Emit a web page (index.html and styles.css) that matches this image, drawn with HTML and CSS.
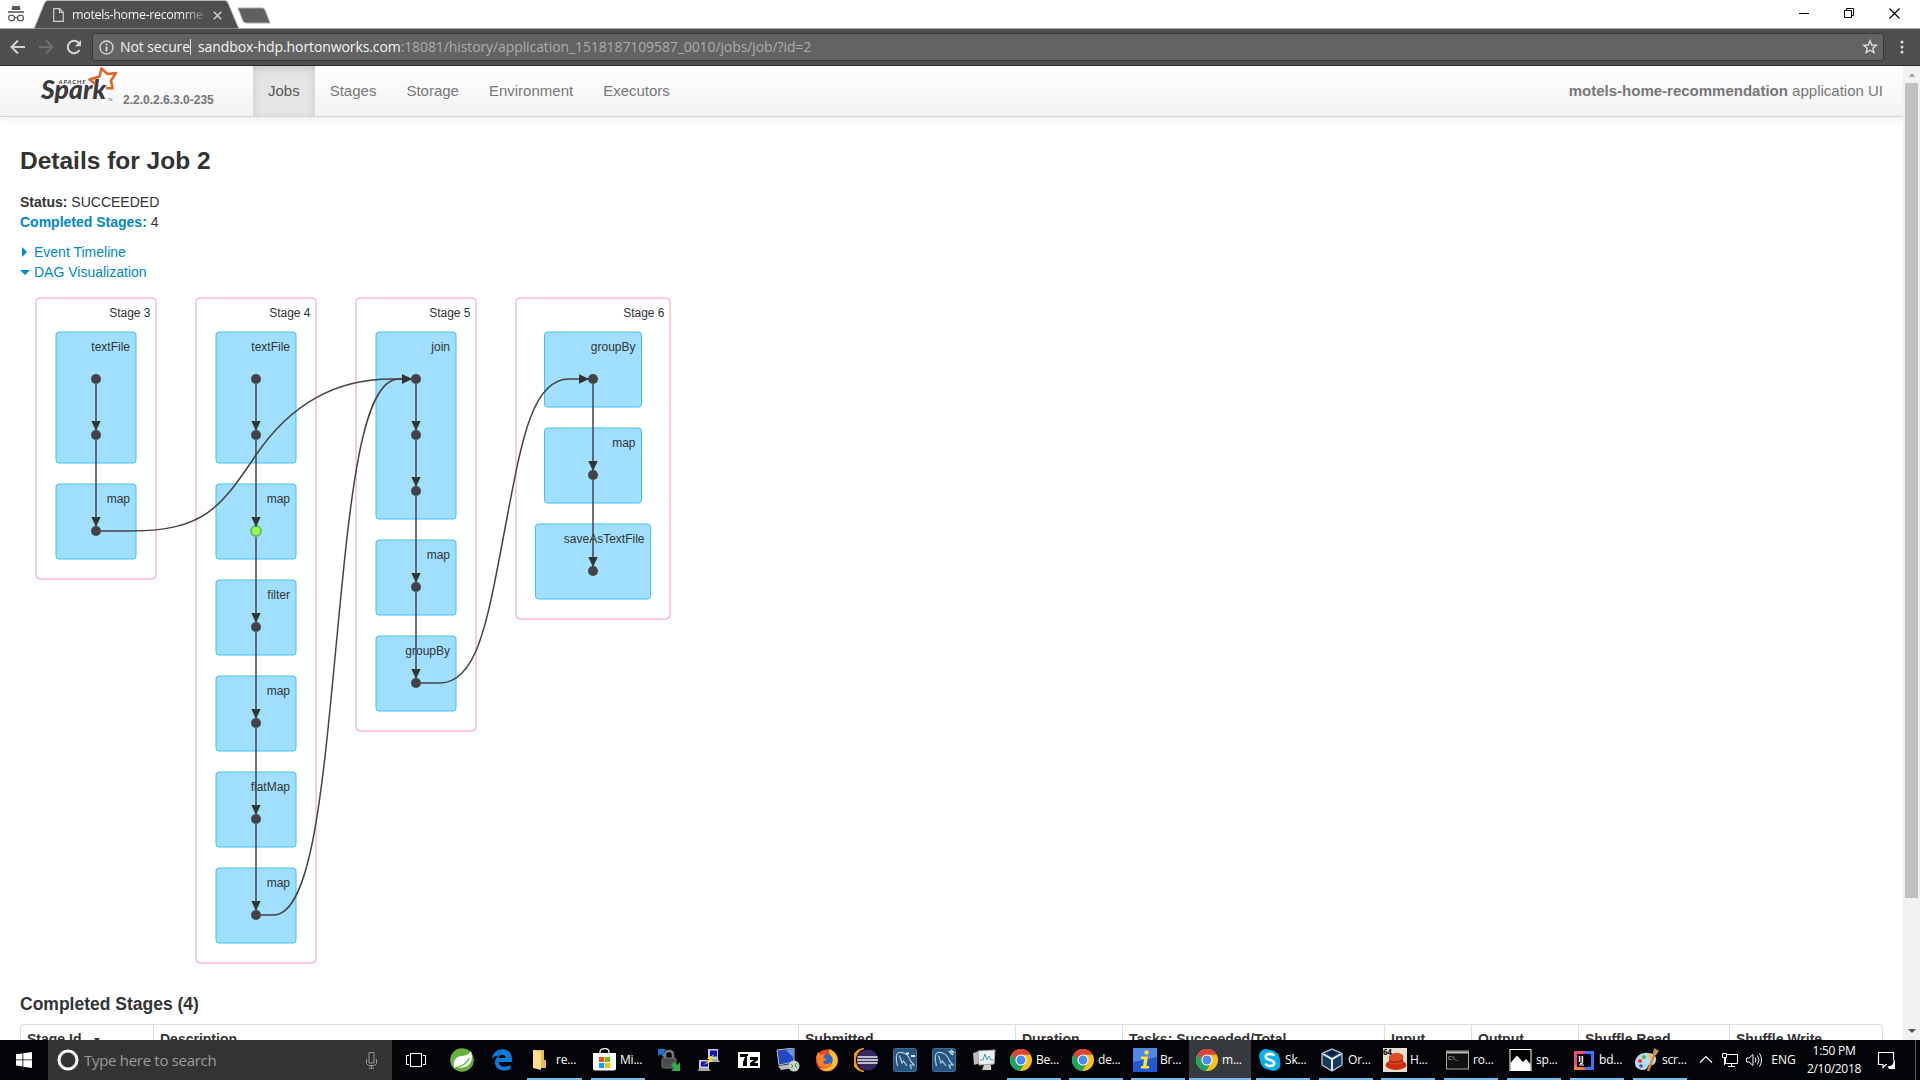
FILE: index.html
```html
<!DOCTYPE html>
<html lang="en">
<head>
<meta charset="utf-8">
<title>motels-home-recommendation - Details for Job 2</title>
<link rel="stylesheet" href="styles.css">
</head>
<body>
<svg class="defs" width="0" height="0">
  <defs>
    <marker id="arrow" viewBox="0 0 10 10" refX="9" refY="5" markerUnits="userSpaceOnUse" markerWidth="10" markerHeight="10" orient="auto"><path d="M0 0.3L10 5L0 9.7z" fill="#333"/></marker>
    <symbol id="chrome" viewBox="0 0 24 24">
      <circle cx="12" cy="12" r="11" fill="#fbc116"/>
      <path d="M12 12L2.5 6.5A11 11 0 0 1 21.5 6.5H12z" fill="#dc4437"/>
      <path d="M12 12L2.5 6.5A11 11 0 0 0 11 23L16.6 14.6z" fill="#1da462"/>
      <path d="M2.5 6.5A11 11 0 0 1 21.5 6.5H12L8 13z" fill="#dc4437"/>
      <circle cx="12" cy="12" r="5.6" fill="#fff"/><circle cx="12" cy="12" r="4.5" fill="#4a8af4"/>
    </symbol>
    <symbol id="mysql" viewBox="0 0 24 24">
      <rect x="0.5" y="0.5" width="23" height="23" rx="2" fill="#24567f" stroke="#3d7199"/>
      <path d="M4.500 18C2.500 11 3 5 6 4.500C12 4 16 8 17.500 13L21 17L17 17L18.500 21M6.500 7.500L9 15L10.500 13L14 18" fill="none" stroke="#b9cedd" stroke-width="1.200"/>
    </symbol>
  </defs>
</svg>

<header class="tabstrip">
  <svg class="incognito" width="18" height="18" viewBox="0 0 18 18"><path d="M4.500 5L5.500 0.500L9 1.200L12.500 0.500L13.500 5z" fill="#555"/><path d="M1 7H17" stroke="#555" stroke-width="1.600"/><g fill="none" stroke="#555" stroke-width="1.200"><circle cx="4.500" cy="13" r="2.900"/><circle cx="13.500" cy="13" r="2.900"/><path d="M7.400 12.500H10.600"/></g></svg>
  <div class="tab">
    <svg class="tabshape" width="206" height="29" viewBox="0 0 206 29"><path d="M0 29L10.500 3Q11.500 0.500 14 0.500H191Q193 0.500 194 3L205 29z" fill="#4f4f4f" stroke="#b5b5b5"/></svg>
    <svg class="tabfile" width="11" height="14" viewBox="0 0 11 14"><path d="M0.700 0.700H6.500L10.300 4.500V13.300H0.700zM6.500 0.700V4.500H10.300" fill="none" stroke="#d0d0d0" stroke-width="1.200"/></svg>
    <span class="tabtitle">motels-home-recommen</span>
    <svg class="tabclose" width="9" height="9" viewBox="0 0 9 9"><path d="M0.700 0.700L8.300 8.300M8.300 0.700L0.700 8.300" stroke="#ccc" stroke-width="1.600"/></svg>
  </div>
  <svg class="newtab" width="34" height="18" viewBox="0 0 34 18"><path d="M1 1H25Q27 1 28 3L33 16H10Q7 16 6 14z" fill="#606060" stroke="#aaa"/></svg>
  <div class="winbtns">
    <svg width="10" height="10" viewBox="0 0 10 10"><path d="M0 5.500H10" stroke="#000"/></svg>
    <svg width="10" height="10" viewBox="0 0 10 10"><path d="M0.500 2.500H7.500V9.500H0.500zM2.500 2.500V0.500H9.500V7.500H7.500" fill="none" stroke="#000"/></svg>
    <svg width="11" height="11" viewBox="0 0 11 11"><path d="M0.500 0.500L10.500 10.500M10.500 0.500L0.500 10.500" stroke="#000" stroke-width="1.200"/></svg>
  </div>
</header>

<div class="toolbar">
  <div class="navbtns">
    <svg width="16" height="16" viewBox="0 0 16 16"><path d="M15 8H2M8 1.500L1.500 8L8 14.500" fill="none" stroke="#d5d5d5" stroke-width="2"/></svg>
    <svg width="16" height="16" viewBox="0 0 16 16"><path d="M1 8H14M8 1.500L14.500 8L8 14.500" fill="none" stroke="#6f6f6f" stroke-width="2"/></svg>
    <svg width="16" height="16" viewBox="0 0 16 16"><path d="M13.500 11A6.200 6.200 0 1 1 12.500 3.600" fill="none" stroke="#d5d5d5" stroke-width="2"/><path d="M15 1V7.200H8.800z" fill="#d5d5d5"/></svg>
  </div>
  <div class="omnibox">
    <svg width="15" height="15" viewBox="0 0 15 15"><circle cx="7.500" cy="7.500" r="6.500" fill="none" stroke="#ddd" stroke-width="1.300"/><path d="M7.500 6.500V11.300M7.500 3.500V5.200" stroke="#ddd" stroke-width="1.800"/></svg>
    <span class="secure">Not secure</span>
    <span class="sep"></span>
    <span class="url"><b>sandbox-hdp.hortonworks.com</b>:18081/history/application_1518187109587_0010/jobs/job/?id=2</span>
    <svg class="star" width="16" height="16" viewBox="0 0 16 16"><path d="M8 1.800L9.700 6L14.200 6.300L10.800 9.200L11.900 13.600L8 11.200L4.100 13.600L5.200 9.200L1.800 6.300L6.300 6z" fill="none" stroke="#ddd" stroke-width="1.400"/></svg>
  </div>
  <svg class="kebab" width="4" height="14" viewBox="0 0 4 14"><g fill="#ddd"><circle cx="2" cy="2" r="1.500"/><circle cx="2" cy="7" r="1.500"/><circle cx="2" cy="12" r="1.500"/></g></svg>
</div>

<div class="viewport">
  <div class="page">
    <nav class="navbar">
      <svg class="logo" width="80" height="44" viewBox="0 0 80 44">
        <text class="apache" x="18.500" y="18" textLength="27">APACHE</text>
        <text class="spark" x="1" y="33" textLength="65" lengthAdjust="spacingAndGlyphs">Spark</text>
        <path d="M66 22L72.500 22.500L71 14.500L76 7L67.500 8L61.500 2.500L59.500 10.500L49.500 13.500L55.500 18" fill="none" stroke="#dd672c" stroke-width="2.700" stroke-linejoin="round"/>
        <text class="tm" x="68" y="35">TM</text>
      </svg>
      <span class="version">2.2.0.2.6.3.0-235</span>
      <a class="navlink active">Jobs</a><a class="navlink">Stages</a><a class="navlink">Storage</a><a class="navlink">Environment</a><a class="navlink">Executors</a>
      <p class="appname"><strong>motels-home-recommendation</strong> application UI</p>
    </nav>
    <main class="content">
      <h3>Details for Job 2</h3>
      <ul class="summary">
        <li><strong>Status:</strong> SUCCEEDED</li>
        <li><a><strong>Completed Stages:</strong></a> 4</li>
      </ul>
      <a class="toggle"><span class="caret right"></span>Event Timeline</a>
      <a class="toggle"><span class="caret down"></span>DAG Visualization</a>
      <svg class="dag" width="700" height="690" viewBox="20 282 700 690">
        <g class="stage">
          <rect x="36" y="298" width="120" height="281" rx="4"/><rect x="196" y="298" width="120" height="665" rx="4"/><rect x="356" y="298" width="120" height="433" rx="4"/><rect x="516" y="298" width="154" height="321" rx="4"/>
        </g>
        <g class="op">
          <rect x="56" y="332" width="80" height="131" rx="3"/><rect x="56" y="484" width="80" height="75" rx="3"/>
          <rect x="216" y="332" width="80" height="131" rx="3"/><rect x="216" y="484" width="80" height="75" rx="3"/><rect x="216" y="580" width="80" height="75" rx="3"/><rect x="216" y="676" width="80" height="75" rx="3"/><rect x="216" y="772" width="80" height="75" rx="3"/><rect x="216" y="868" width="80" height="75" rx="3"/>
          <rect x="376" y="332" width="80" height="187" rx="3"/><rect x="376" y="540" width="80" height="75" rx="3"/><rect x="376" y="636" width="80" height="75" rx="3"/>
          <rect x="544.500" y="332" width="97" height="75" rx="3"/><rect x="544.500" y="428" width="97" height="75" rx="3"/><rect x="535.500" y="524" width="115" height="75" rx="3"/>
        </g>
        <g class="label">
          <text x="150.500" y="317">Stage 3</text><text x="130" y="351">textFile</text><text x="130" y="503">map</text>
          <text x="310.500" y="317">Stage 4</text><text x="290" y="351">textFile</text><text x="290" y="503">map</text><text x="290" y="599">filter</text><text x="290" y="695">map</text><text x="290" y="791">flatMap</text><text x="290" y="887">map</text>
          <text x="470.500" y="317">Stage 5</text><text x="450" y="351">join</text><text x="450" y="559">map</text><text x="450" y="655">groupBy</text>
          <text x="664.500" y="317">Stage 6</text><text x="635.500" y="351">groupBy</text><text x="635.500" y="447">map</text><text x="644.500" y="543">saveAsTextFile</text>
        </g>
        <g class="node">
          <circle cx="96" cy="379" r="5"/><circle cx="96" cy="435" r="5"/><circle cx="96" cy="531" r="5"/>
          <circle cx="256" cy="379" r="5"/><circle cx="256" cy="435" r="5"/><circle class="cached" cx="256" cy="531" r="5"/><circle cx="256" cy="627" r="5"/><circle cx="256" cy="723" r="5"/><circle cx="256" cy="819" r="5"/><circle cx="256" cy="915" r="5"/>
          <circle cx="416" cy="379" r="5"/><circle cx="416" cy="435" r="5"/><circle cx="416" cy="491" r="5"/><circle cx="416" cy="587" r="5"/><circle cx="416" cy="683" r="5"/>
          <circle cx="593" cy="379" r="5"/><circle cx="593" cy="475" r="5"/><circle cx="593" cy="571" r="5"/>
        </g>
        <g class="edge">
          <path d="M96 384V430"/><path d="M96 440V526"/>
          <path d="M256 384V430"/><path d="M256 440V526"/><path d="M256 537V622"/><path d="M256 632V718"/><path d="M256 728V814"/><path d="M256 824V910"/>
          <path d="M416 384V430"/><path d="M416 440V486"/><path d="M416 496V582"/><path d="M416 592V678"/>
          <path d="M593 384V470"/><path d="M593 480V566"/>
          <path d="M101 531H131C206 531 222 505 256 455S336 379 391 379H411"/>
          <path d="M261 915H273C311 915 322 795 336 647S361 379 399 379H411"/>
          <path d="M421 683H440C478 683 488 618 504.500 531S531 379 569 379H588"/>
        </g>
      </svg>
      <h4>Completed Stages (4)</h4>
      <div class="stages">
        <span>Stage Id <i class="sort"></i></span><span>Description</span><span>Submitted</span><span>Duration</span><span>Tasks: Succeeded/Total</span><span>Input</span><span>Output</span><span>Shuffle Read</span><span>Shuffle Write</span>
      </div>
    </main>
  </div>
  <div class="scrollbar"><i class="up"></i><i class="thumb"></i><i class="dn"></i></div>
</div>

<footer class="taskbar">
  <div class="start"><svg width="16" height="16" viewBox="0 0 16 16"><path d="M0 2.300L6.500 1.400V7.500H0zM7.300 1.300L16 0V7.500H7.300zM0 8.300H6.500V14.500L0 13.600zM7.300 8.300H16V16L7.300 14.700z" fill="#fff"/></svg></div>
  <div class="search">
    <svg width="22" height="22" viewBox="0 0 22 22"><circle cx="11" cy="11" r="9" fill="none" stroke="#fff" stroke-width="3"/></svg>
    <span>Type here to search</span>
    <svg class="mic" width="11" height="17" viewBox="0 0 11 17"><path d="M3 0.500H8V11H3zM0.500 7V11.500L2.500 13.500H8.500L10.500 11.500V7M5.500 13.500V16M3 16.200H8" fill="none" stroke="#999"/></svg>
  </div>
  <div class="pin w48"><svg width="20" height="14" viewBox="0 0 20 14"><path d="M4.500 0.500H15.500V13.500H4.500zM3 2.500H0.500V11.500H3M17 2.500H19.500V11.500H17" fill="none" stroke="#fff"/></svg></div>
  <div class="pin w44"><svg width="24" height="24" viewBox="0 0 24 24"><circle cx="12" cy="12" r="11.800" fill="#68b13e"/><path d="M21 3C23.500 11 21 18 13 19.500C9 20 6 19 4.500 20.500C2 13 5.500 8.500 12 8C16 7.500 19 6.500 21 3z" fill="#fff"/><path d="M5 20C12 18.500 17 15 19.500 10" fill="none" stroke="#68b13e" stroke-width="1.300"/></svg></div>
  <div class="pin w36"><svg width="20" height="22" viewBox="0 0 20 22"><path d="M0 10C1 3.500 5 0.300 10.500 0.300C17 0.300 20 5 20 10.500V13H6.500C7 18 13 19 18.500 16V20.200C12 23 3.500 21.500 3 14C2.800 10.500 5 7.500 8 6.500C4.500 6.500 1.500 7.500 0 10zM6.800 9H13.500C13.500 5 7.500 4.500 6.800 9z" fill="#0c7cd8" fill-rule="evenodd"/></svg></div>
  <div class="app ml7"><svg width="24" height="24" viewBox="0 0 24 24"><path d="M4 2H15V12H17V20H4z" fill="#e8bc5c"/><path d="M4 2L12 4V22L4 20z" fill="#ffe08e"/></svg><span>re...</span></div>
  <div class="app ml9"><svg width="24" height="24" viewBox="0 0 24 24"><path d="M7 6V4Q7 0.700 12 0.700Q16 0.700 16 4V6" fill="none" stroke="#fff" stroke-width="1.300"/><path d="M0 5H23V20.500Q23 22.500 21 22.500H2Q0 22.500 0 20.500z" fill="#fff"/><path d="M6 9H11.200V14H6z" fill="#f25022"/><path d="M12 9H17.200V14H12z" fill="#7fba00"/><path d="M6 15H11.200V20H6z" fill="#00a4ef"/><path d="M12 15H17.200V20H12z" fill="#ffb900"/></svg><span>Mi...</span></div>
  <div class="pin w41 ml3"><svg width="24" height="24" viewBox="0 0 24 24"><path d="M1 1H9L7 4L9 7L6 9L4 6L1 8z" fill="#1b74cf"/><path d="M8 11V7Q8 3 12 3Q16 3 16 7V11" fill="none" stroke="#777" stroke-width="2.500"/><rect x="5" y="10" width="14" height="10" rx="1.500" fill="#4c4c4c" stroke="#777"/><path d="M23 23H14L17 20L14 17L17 14L20 17L23 14z" fill="#2eb34a"/></svg></div>
  <div class="pin w40"><svg width="24" height="24" viewBox="0 0 24 24"><path d="M11 1H21V11H11zM2 12H12V21H2z" fill="#ccc"/><path d="M13 2.500H20V8.500H13zM4 13.500H11V18.500H4z" fill="#0b10c8"/><path d="M12 11H21L23 14H13zM2 20H11L14 23H1z" fill="#aaa"/><path d="M18 6L10 10.500L13 12L6 17L16 13L13 11z" fill="#ffee00"/></svg></div>
  <div class="pin w40"><svg width="22" height="16" viewBox="0 0 22 16"><rect width="22" height="16" fill="#fff"/><path d="M2 2H10V4H9V14H5V10L7 5H2zM12 5H20V8L16 11H20V14H12V11L16 8H12z" fill="#000"/></svg></div>
  <div class="pin w38"><svg width="24" height="24" viewBox="0 0 24 24"><path d="M1 2L18 0V14L3 17z" fill="#2447c4" stroke="#bbb"/><path d="M10 2L17 1V9z" fill="#7394ec"/><path d="M2 18L15 16L18 20L5 22z" fill="#bbb"/><circle cx="18" cy="18" r="5.500" fill="#c8d0c8"/><path d="M15 16L17 18L15 20M21 15L19 17L21 20" fill="none" stroke="#3d9a4b"/></svg></div>
  <div class="pin w40"><svg width="24" height="24" viewBox="0 0 24 24"><circle cx="12" cy="12.500" r="11" fill="#f0432b"/><path d="M14 1C23 4 25 14 20 19C16 24 8 24 5 20C12 22 18 18 17 12C17 7 13 6 14 1z" fill="#ffc22b"/><circle cx="12" cy="12" r="5.800" fill="#2d67c9"/><path d="M1 9L3 4L6 7L10 6L8 10L12 11L8 14C9 17 13 17 16 14C16 19 8 22 4 17z" fill="#ff8524"/></svg></div>
  <div class="pin w38"><svg width="24" height="24" viewBox="0 0 24 24"><path d="M10 0.500A11.500 11.500 0 0 0 10 23.500A12 12 0 0 1 10 0.500z" fill="#f7941e" stroke="#f7941e"/><circle cx="13.500" cy="12" r="10.500" fill="#35295f"/><path d="M3.500 9H23.500M3 12H24M3.500 15H23.500" stroke="#eee" stroke-width="1.700"/></svg></div>
  <div class="pin w40"><svg width="24" height="24"><use href="#mysql"/><path d="M13 5.500H16M18 8H22" stroke="#eee" stroke-width="1.800"/></svg></div>
  <div class="pin w38"><svg width="24" height="24"><use href="#mysql"/><path d="M17 3L21 7M19 2L22 5" stroke="#eee" stroke-width="1.500"/></svg></div>
  <div class="pin w41"><svg width="24" height="24" viewBox="0 0 24 24"><path d="M1 5L8 3V15L2 17z" fill="#bbb"/><path d="M6 3L23 2L22 16L7 17z" fill="#f0f0f0" stroke="#aaa"/><path d="M8 12H11L13 6L15 12L17 8L19 12H21" fill="none" stroke="#35a0c8"/><path d="M12 17H19V22H10z" fill="#ccc"/></svg></div>
  <div class="app ml3"><svg width="24" height="24"><use href="#chrome"/></svg><span>Be...</span></div>
  <div class="app ml8"><svg width="24" height="24"><use href="#chrome"/></svg><span>de...</span></div>
  <div class="app ml8"><svg width="24" height="24" viewBox="0 0 24 24"><rect width="24" height="24" rx="1" fill="#2259d6"/><path d="M0 0H24V9L0 14z" fill="#5287e8"/><circle cx="13.500" cy="4.500" r="2.200" fill="#ffe71f"/><path d="M8 8.500H15L13.500 18H16V20.500H8V18H10L11 11H8z" fill="#ffe71f"/></svg><span>Br...</span></div>
  <div class="app current"><svg width="24" height="24"><use href="#chrome"/></svg><span>m...</span></div>
  <div class="app ml5"><svg width="24" height="24" viewBox="0 0 24 24"><circle cx="8" cy="8" r="7" fill="#00aff0"/><circle cx="15.500" cy="16" r="7" fill="#00aff0"/><circle cx="12" cy="12" r="10" fill="#00aff0"/><path d="M16 8Q15 5.800 12 5.800Q7.800 5.800 7.800 8.800Q7.800 11 12 12Q16.200 13 16.200 15Q16.200 18 12 18Q8.500 18 7.800 15.500" fill="none" stroke="#fff" stroke-width="2.700"/></svg><span>Sk...</span></div>
  <div class="app ml9"><svg width="24" height="24" viewBox="0 0 24 24"><path d="M11 1L21 5.500V17L11 23L1 17V5.500z" fill="#17385f" stroke="#bccbdb" stroke-width="1.300"/><path d="M2 6L11 11L20 6M11 11V22" fill="none" stroke="#e4ebf1" stroke-width="2"/><path d="M6 5L11 3L16 5L11 8z" fill="#0b1c38"/></svg><span>Or...</span></div>
  <div class="app ml8"><svg width="24" height="24" viewBox="0 0 24 24"><rect width="24" height="24" fill="#eadfce"/><ellipse cx="13" cy="17" rx="10.500" ry="5" fill="#cf2d12"/><path d="M6 15V8Q13 2 20 7V14Q14 18 6 15z" fill="#e24a28"/><path d="M6 13Q13 16 20 12" fill="none" stroke="#8c1607" stroke-width="1.300"/><text x="0" y="7" font-size="8" font-weight="700">64</text></svg><span>H...</span></div>
  <div class="app ml9"><svg width="24" height="24" viewBox="0 0 24 24"><rect x="0.500" y="3" width="22" height="18" fill="#101010" stroke="#aaa"/><path d="M1 4.500H22" stroke="#bbb" stroke-width="2"/><text x="2" y="12" font-size="6" fill="#ddd">C:\_</text></svg><span>ro...</span></div>
  <div class="app ml9"><svg width="24" height="24" viewBox="0 0 24 24"><rect x="1" y="1.500" width="21" height="21" fill="#000" stroke="#fff"/><path d="M1.500 15L8 7.500L14 14L17 11L21.500 16V22H1.500z" fill="#fff"/></svg><span>sp...</span></div>
  <div class="app ml9"><svg width="24" height="24" viewBox="0 0 24 24"><path d="M2 3H22V22H2z" fill="#3478ff"/><path d="M2 3H14L8 12L14 22H2z" fill="#eb4b7c"/><path d="M2 17L10 20L14 22H2z" fill="#f0863c"/><rect x="5" y="6" width="14" height="13" fill="#000"/><text x="6" y="14" font-size="9" font-weight="700" fill="#fff">IJ</text><path d="M7 17H12" stroke="#fff"/></svg><span>bd...</span></div>
  <div class="app ml9"><svg width="24" height="24" viewBox="0 0 24 24"><path d="M0 15C0 8 7 4 13 5C20 5 23 10 20 15C18 19 15 15 13 18C12 22 8 23 4 21C1 20 0 18 0 15z" fill="#b7d9ee"/><circle cx="5" cy="13" r="2" fill="#e63a3a"/><circle cx="9" cy="9" r="2" fill="#53b33f"/><circle cx="15" cy="8" r="2" fill="#f4c52d"/><circle cx="6" cy="18" r="1.800" fill="#2e62c2"/><path d="M20 5L13 23" stroke="#d58a38" stroke-width="2.500"/><path d="M18 6L19 0L24 3L21 7z" fill="#c49567"/></svg><span>scr...</span></div>
  <div class="tray">
    <svg width="24" height="24" viewBox="0 0 24 24"><path d="M6 14.500L12 8.500L18 14.500" fill="none" stroke="#fff" stroke-width="1.200"/></svg>
    <svg width="24" height="24" viewBox="0 0 24 24"><path d="M9 6.500H19.500V15.500H7.500V10M13.500 15.500V18.500M10 18.500H17M4.500 5.500H8.500V9.500H4.500zM6.500 9.500V17" fill="none" stroke="#fff"/></svg>
    <svg width="24" height="24" viewBox="0 0 24 24"><path d="M4.500 10V14H7L11 17.500V6.500L7 10zM13 9.500Q15 12 13 14.500M15.500 7.500Q18.500 12 15.500 16.500M17.500 5.500Q21.500 12 17.500 18.500" fill="none" stroke="#fff"/></svg>
    <span class="lang">ENG</span>
    <span class="clock">1:50 PM<br>2/10/2018</span>
    <svg class="note" width="18" height="18" viewBox="0 0 18 18"><path d="M16.500 9V1.500H1.500V13.500H6V16.500L9 13.500H10" fill="none" stroke="#fff" stroke-width="1.200"/><path d="M16.500 9A5 5 0 1 1 10.500 15A5 5 0 0 0 16.500 9z" fill="#fff"/></svg>
    <i class="peek"></i>
  </div>
</footer>
</body>
</html>
```
FILE: styles.css
```css
* { box-sizing: border-box; }
body { margin: 0; width: 1920px; height: 1080px; overflow: hidden; display: flex; flex-direction: column; background: #fff; color: #333; font: 14px/20px "Liberation Sans", Arial, sans-serif; }
svg { display: block; flex: none; }
.defs { position: absolute; }
a { color: #08c; text-decoration: none; }

/* browser frame */
.tabstrip { height: 29px; flex: none; display: flex; border-bottom: 1px solid #a9a9a9; font-family: "Open Sans", "Noto Sans", sans-serif; }
.incognito { margin: 5px 0 0 7px; }
.tab { position: relative; width: 206px; height: 29px; margin-left: 9px; padding-left: 19px; display: flex; align-items: flex-start; }
.tabshape { position: absolute; left: 0; top: 0; }
.tabfile, .tabtitle, .tabclose { position: relative; }
.tabfile { margin-top: 8px; }
.tabtitle { margin: 5px 0 0 8px; width: 132px; font-size: 12.500px; letter-spacing: -0.350px; white-space: nowrap; overflow: hidden; color: transparent; background: linear-gradient(90deg, #fff 82%, #777 100%); background-clip: text; }
.tabclose { margin: 11px 0 0 9px; }
.newtab { margin: 7px 0 0 -3px; }
.winbtns { margin: 8px 20px 0 auto; display: flex; gap: 35px; }
.toolbar { height: 37px; flex: none; display: flex; align-items: center; background: #4f4f4f; border-bottom: 1px solid #262626; font-family: "Open Sans", "Noto Sans", sans-serif; }
.navbtns { display: flex; gap: 12px; padding-left: 10px; width: 92px; }
.omnibox { width: 1792px; height: 28px; display: flex; align-items: center; padding-left: 6px; border: 1px solid #393939; border-radius: 3px; background: #636363; white-space: nowrap; }
.secure { width: 76px; padding-left: 6px; color: #f1f1f1; font-size: 14px; letter-spacing: -0.100px; }
.sep { width: 1px; height: 16px; background: #ddd; margin-right: 7px; }
.url { font-size: 14px; letter-spacing: -0.100px; color: #adadad; }
.url b { font-weight: 400; color: #f5f5f5; }
.star { margin: 0 5px 0 auto; }
.kebab { margin-left: 16px; }

/* page */
.viewport { height: 974px; flex: none; display: flex; overflow: hidden; }
.page { width: 1903px; overflow: hidden; }
.navbar { height: 51px; display: flex; padding-right: 20px; font-size: 15px; color: #777; background: linear-gradient(#fff, #f2f2f2); border-bottom: 1px solid #d4d4d4; box-shadow: 0 1px 10px rgba(0, 0, 0, .1); }
.logo { margin-left: 40px; }
.apache { font: italic 700 6px "Lato", sans-serif; fill: #3c3a3e; }
.spark { font: italic 900 27px "Lato", sans-serif; fill: #3c3a3e; }
.tm { font-size: 3px; fill: #555; }
.version { width: 130px; margin: 24px 0 0 3px; font-size: 12px; font-weight: 700; }
.navlink { padding: 15px; color: #777; }
.navlink.active { color: #555; background: #e5e5e5; box-shadow: inset 0 3px 8px rgba(0, 0, 0, .125); }
.appname { margin: 15px 0 0 auto; }
.content { padding: 24px 20px 0; }
h3 { margin: 0; font-size: 24.500px; line-height: 40px; }
h4 { margin: 0 0 10px; font-size: 17.500px; line-height: 20px; }
.summary { list-style: none; margin: 11px 0 10px; padding: 0; }
.toggle { display: flex; align-items: center; }
.caret { width: 14px; }
.caret::before { content: ""; display: block; width: 0; border: 5px solid transparent; }
.right::before { margin-left: 2px; border-left-color: #08c; border-right: 0; }
.down::before { border-top-color: #08c; border-bottom: 0; }
.dag { margin-bottom: 22px; }
.stage rect { fill: #fff; stroke: #ff99ac; }
.op rect { fill: #a0dfff; stroke: #3ec0ff; }
.label { font-size: 12px; fill: #333; text-anchor: end; }
.node { fill: #444; }
.cached { fill: #a3f545; stroke: #52c366; stroke-width: 2px; }
.edge path { fill: none; stroke: #444; stroke-width: 1.500px; marker-end: url(#arrow); }
.stages { display: grid; grid-template-columns: 133px 645px 217px 107px 262px 87px 107px 151px 154px; height: 40px; border: 1px solid #ddd; border-left: 0; border-radius: 4px 4px 0 0; font-weight: 700; }
.stages span { padding: 4px 6px; border-left: 1px solid #ddd; white-space: nowrap; }
.stages span:first-child { border-top-left-radius: 4px; }
.sort { display: inline-block; margin: 0 0 2px 9px; border: 3px solid transparent; border-top: 4px solid #333; border-bottom: 0; }
.scrollbar { width: 17px; display: flex; flex-direction: column; align-items: center; background: #f1f1f1; }
.up { margin-top: 7px; border: 3.500px solid transparent; border-bottom: 4px solid #a3a3a3; border-top: 0; }
.thumb { width: 13px; height: 815px; margin-top: 6px; background: #c1c1c1; }
.dn { margin: auto 0 7px; border: 4px solid transparent; border-top: 4px solid #505050; border-bottom: 0; }

/* taskbar */
.taskbar { height: 40px; flex: none; display: flex; background: #020408; color: #fff; font: 12px/18px "Open Sans", "Noto Sans", sans-serif; }
.start { width: 48px; display: grid; place-items: center; }
.search { width: 344px; display: flex; align-items: center; padding: 0 15px 0 9px; background: #333; color: #9b9b9b; font-size: 15px; letter-spacing: -0.300px; }
.search span { margin-left: 5px; }
.mic { margin-left: auto; }
.pin { flex: none; display: grid; place-items: center; }
.w36 { width: 36px; } .w38 { width: 38px; } .w40 { width: 40px; } .w41 { width: 41px; } .w44 { width: 44px; } .w48 { width: 48px; }
.app { width: 54px; flex: none; display: flex; align-items: center; gap: 3px; padding-left: 2px; border-bottom: 2px solid #76b9ed; padding-top: 2px; white-space: nowrap; letter-spacing: -0.200px; }
.ml3 { margin-left: 3px; } .ml5 { margin-left: 5px; } .ml7 { margin-left: 7px; width: 55px; } .ml8 { margin-left: 8px; } .ml9 { margin-left: 9px; }
.current { width: 62px; margin-left: 4px; padding-left: 6px; background: #363a3f; }
.tray { flex: 1; display: flex; align-items: center; padding-left: 7px; }
.lang { width: 35px; text-align: center; }
.clock { width: 66px; text-align: center; letter-spacing: -0.300px; }
.note { margin-left: 10px; }
.peek { width: 1px; height: 40px; margin: 0 4px 0 auto; background: #555; }
```
